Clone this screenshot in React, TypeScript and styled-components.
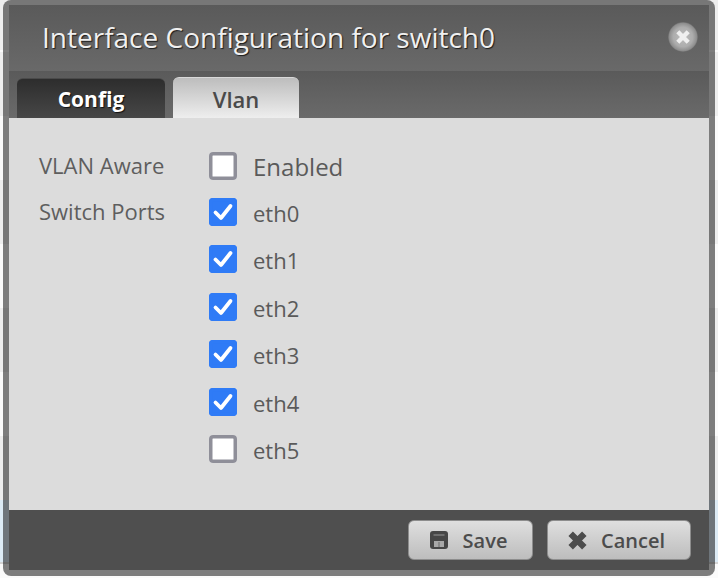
import React from "react";
import styled, { createGlobalStyle } from "styled-components";

const GlobalStyle = createGlobalStyle`
  html, body {
    margin: 0;
    padding: 0;
    height: 100%;
    background: #fbfbfb;
    font-family: "Open Sans", "Noto Sans", sans-serif;
  }
`;

const ports = [
  { name: "eth0", checked: true },
  { name: "eth1", checked: true },
  { name: "eth2", checked: true },
  { name: "eth3", checked: true },
  { name: "eth4", checked: true },
  { name: "eth5", checked: false },
];

// the table rows of the page behind the modal show through its border
const Page = styled.div`
  width: 718px;
  height: 578px;
  overflow: hidden;
  box-sizing: border-box;
  padding: 0 3px 2px;
  background:
    linear-gradient(#dcebf6, #dcebf6) 0 500px / 100% 62px no-repeat,
    linear-gradient(#d4d4d4, #d4d4d4) 0 562px / 100% 2px no-repeat,
    linear-gradient(#fbfbfb, #fbfbfb) 0 564px / 100% 14px no-repeat,
    repeating-linear-gradient(#eeeeee 0, #eeeeee 64px, #fbfbfb 64px, #fbfbfb 128px) 0 52px;
`;

const Dialog = styled.div`
  box-sizing: border-box;
  height: 576px;
  display: flex;
  flex-direction: column;
  border: solid rgba(0, 0, 0, 0.5);
  border-width: 5px 6px 6px;
  border-radius: 8px;
  background: #dcdcdc;
  background-clip: padding-box;
`;

const TitleBar = styled.div`
  height: 66px;
  flex: none;
  display: flex;
  align-items: center;
  justify-content: space-between;
  box-sizing: border-box;
  padding: 0 11px 2px 33px;
  background: linear-gradient(#5a5a5a, #696969);
`;

const Title = styled.h1`
  margin: 0;
  font-size: 28px;
  font-weight: 400;
  color: #f0f0f0;
  text-shadow: 1px 1px 1px #1c1c1c;
`;

const CloseButton = styled.button`
  width: 30px;
  height: 30px;
  padding: 0;
  border: none;
  border-radius: 50%;
  display: flex;
  align-items: center;
  justify-content: center;
  background: radial-gradient(circle closest-side, #bcbcbc 0, #adadad 65%, #8e8e8e 92%, #6a6a6a 100%);
`;

const TabBar = styled.div`
  height: 47px;
  flex: none;
  display: flex;
  align-items: flex-end;
  gap: 8px;
  box-sizing: border-box;
  padding-left: 8px;
  background: linear-gradient(#5a5a5a, #6a6a6a);
`;

const Tab = styled.div<{ $active?: boolean; $width: number }>`
  width: ${({ $width }) => $width}px;
  height: ${({ $active }) => ($active ? 41 : 40)}px;
  box-sizing: border-box;
  display: flex;
  align-items: center;
  justify-content: center;
  padding-top: 1px;
  border-radius: 6px 6px 0 0;
  font-size: ${({ $active }) => ($active ? 22 : 21)}px;
  font-weight: ${({ $active }) => ($active ? 600 : 700)};
  color: ${({ $active }) => ($active ? "#4a4a4a" : "#fff")};
  text-shadow: ${({ $active }) => ($active ? "none" : "1px 1px 1px #111")};
  background: ${({ $active }) =>
    $active
      ? "linear-gradient(#bdbdbd, #eeeeee)"
      : "linear-gradient(#2d2d2d, #474747)"};
  border-top: 1px solid ${({ $active }) => ($active ? "#d8d8d8" : "#4a4a4a")};
`;

const Content = styled.div`
  flex: 1;
  display: grid;
  grid-template-columns: 170px 1fr;
  align-content: start;
  box-sizing: border-box;
  padding: 34px 0 0 30px;
`;

const FieldLabel = styled.div`
  font-size: 22px;
  line-height: 26px;
  color: #5e5e5e;
`;

const FieldValue = styled.div`
  display: flex;
  flex-direction: column;
  margin-bottom: 18px;
`;

const PortList = styled(FieldValue)`
  gap: 19.4px;
  margin-bottom: 0;
`;

const CheckRow = styled.label`
  display: flex;
  align-items: center;
  height: 28px;
`;

const Box = styled.span<{ $checked: boolean }>`
  width: 28px;
  height: 28px;
  flex: none;
  display: flex;
  align-items: center;
  justify-content: center;
  border-radius: 4px;
  background: ${({ $checked }) => ($checked ? "#2f7bf6" : "#fff")};
  box-shadow: inset 0 0 0 3.5px ${({ $checked }) => ($checked ? "#2f7bf6" : "#8f8f99")};
`;

const CheckText = styled.span<{ $large?: boolean }>`
  margin-left: 16px;
  font-size: ${({ $large }) => ($large ? 24 : 22)}px;
  color: #5a5a5a;
  position: relative;
  top: ${({ $large }) => ($large ? 0 : 1)}px;
`;

const Footer = styled.div`
  height: 60px;
  flex: none;
  display: flex;
  align-items: center;
  justify-content: flex-end;
  gap: 14px;
  box-sizing: border-box;
  padding-right: 18px;
  background: #4f4f4f;
`;

const Button = styled.button<{ $width: number; $gap: number }>`
  width: ${({ $width }) => $width}px;
  height: 40px;
  display: flex;
  align-items: center;
  justify-content: center;
  gap: ${({ $gap }) => $gap}px;
  padding: 0 ${({ $gap }) => 19 - $gap}px 0 0;
  border: 1px solid #8d8d8d;
  border-radius: 6px;
  background: linear-gradient(#dfdfdf, #bdbdbd);
  font-family: inherit;
  font-size: 20px;
  font-weight: 600;
  color: #4c4c4c;
`;

const CheckIcon = () => (
  <svg width="22" height="20" viewBox="0 0 22 20" fill="none">
    <path
      d="M3.5 10.5 L9 16 L18.5 4"
      stroke="#fff"
      strokeWidth="3.8"
      strokeLinecap="round"
      strokeLinejoin="round"
    />
  </svg>
);

const SaveIcon = () => (
  <svg width="18" height="18" viewBox="0 0 18 18">
    <rect x="0" y="0" width="18" height="18" rx="3" fill="#464646" />
    <rect x="3.5" y="3" width="11" height="2" fill="#6e6e6e" />
    <rect x="4" y="10" width="10" height="6" fill="#a8a8a8" />
    <rect x="8.5" y="11" width="1" height="5" fill="#6a6a6a" />
  </svg>
);

const CrossIcon = ({ size, color, weight }: { size: number; color: string; weight: number }) => (
  <svg width={size} height={size} viewBox="0 0 20 20">
    <path d="M3.5 3.5 L16.5 16.5 M16.5 3.5 L3.5 16.5" stroke={color} strokeWidth={weight} />
  </svg>
);

const CheckField = ({ label, checked, large }: { label: string; checked: boolean; large?: boolean }) => (
  <CheckRow>
    <Box $checked={checked}>{checked && <CheckIcon />}</Box>
    <CheckText $large={large}>{label}</CheckText>
  </CheckRow>
);

export default function App() {
  return (
    <Page>
      <GlobalStyle />
      <Dialog>
        <TitleBar>
          <Title>Interface Configuration for switch0</Title>
          <CloseButton>
            <CrossIcon size={16} color="#efefef" weight={5.5} />
          </CloseButton>
        </TitleBar>
        <TabBar>
          <Tab $width={148}>Config</Tab>
          <Tab $active $width={126}>Vlan</Tab>
        </TabBar>
        <Content>
          <FieldLabel>VLAN Aware</FieldLabel>
          <FieldValue>
            <CheckField label="Enabled" checked={false} large />
          </FieldValue>
          <FieldLabel>Switch Ports</FieldLabel>
          <PortList>
            {ports.map((port) => (
              <CheckField key={port.name} label={port.name} checked={port.checked} />
            ))}
          </PortList>
        </Content>
        <Footer>
          <Button $width={125} $gap={15}>
            <SaveIcon />
            Save
          </Button>
          <Button $width={144} $gap={13}>
            <CrossIcon size={21} color="#4c4c4c" weight={6} />
            Cancel
          </Button>
        </Footer>
      </Dialog>
    </Page>
  );
}
